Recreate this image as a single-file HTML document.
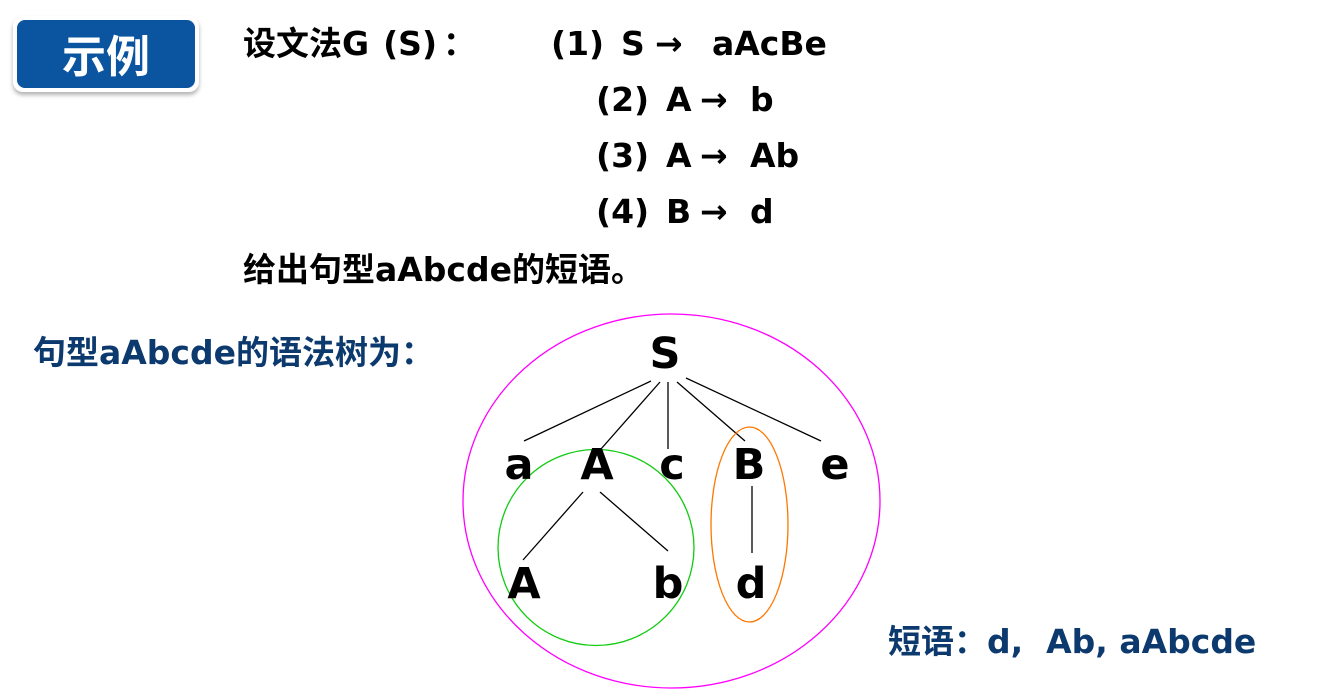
<!DOCTYPE html>
<html><head><meta charset="utf-8"><style>
body{margin:0;width:1330px;height:696px;background:#fff;overflow:hidden;position:relative;font-family:"DejaVu Sans","Noto Sans CJK SC",sans-serif;font-weight:bold}
.t{position:absolute;white-space:nowrap;color:#000;font-size:33px;line-height:1}
.badge{position:absolute;left:13px;top:16px;width:186px;height:76px;background:#fff;border-radius:10px;box-shadow:0 3px 4px rgba(0,0,0,.3)}
.badge div{position:absolute;left:4px;top:4px;right:4px;bottom:4px;background:#0b55a0;border-radius:8px;color:#fff;font-size:44px;text-align:center;line-height:66px;font-family:"Noto Sans CJK SC",sans-serif}
</style></head><body>
<div class="badge"><div>示例</div></div>
<div class="t" style="left:243px;top:27px">设文法G<span style="display:inline-block;width:14px"></span>(S)<span style="display:inline-block;width:6px"></span>：</div>
<div class="t" style="left:551px;top:27px">(1)</div><div class="t" style="left:621px;top:27px">S</div><div class="t" style="left:655px;top:27px">→</div><div class="t" style="left:712px;top:27px">aAcBe</div>
<div class="t" style="left:596px;top:83px">(2)</div><div class="t" style="left:666px;top:83px">A</div><div class="t" style="left:700px;top:83px">→</div><div class="t" style="left:750px;top:83px">b</div>
<div class="t" style="left:596px;top:139px">(3)</div><div class="t" style="left:666px;top:139px">A</div><div class="t" style="left:700px;top:139px">→</div><div class="t" style="left:750px;top:139px">Ab</div>
<div class="t" style="left:596px;top:195px">(4)</div><div class="t" style="left:666px;top:195px">B</div><div class="t" style="left:700px;top:195px">→</div><div class="t" style="left:750px;top:195px">d</div>
<div class="t" style="left:243px;top:253px">给出句型aAbcde的短语。</div>
<div class="t" style="left:33px;top:336px;font-size:33px;color:#0d3a6e">句型aAbcde的语法树为：</div>
<div class="t" style="left:888px;top:625px;font-size:33px;color:#0d3a6e">短语：d,&nbsp;&nbsp;Ab, aAbcde</div>
<svg width="1330" height="696" style="position:absolute;left:0;top:0">
<g stroke="#000" stroke-width="1.3">
<line x1="651" y1="381" x2="524" y2="441"/><line x1="660" y1="382" x2="601" y2="449"/>
<line x1="668" y1="382" x2="668" y2="449"/><line x1="677" y1="382" x2="745" y2="441"/>
<line x1="686" y1="378" x2="821" y2="441"/><line x1="583" y1="492" x2="523" y2="560"/>
<line x1="600" y1="492" x2="668" y2="551"/><line x1="752" y1="486" x2="752" y2="553"/>
</g>
<ellipse cx="671.5" cy="501" rx="208.5" ry="187" fill="none" stroke="#f0f" stroke-width="1.3"/>
<circle cx="596" cy="547.5" r="98" fill="none" stroke="#1c1" stroke-width="1.3"/>
<ellipse cx="749.5" cy="524.5" rx="38.5" ry="97.5" fill="none" stroke="#f70" stroke-width="1.3"/>
<g font-family="DejaVu Sans,sans-serif" font-weight="bold" font-size="43" text-anchor="middle" fill="#000">
<text x="665" y="368">S</text>
<text x="519" y="479">a</text><text x="597" y="479">A</text><text x="672" y="479">c</text><text x="749" y="479">B</text><text x="835" y="479">e</text>
<text x="524" y="598">A</text><text x="668" y="598">b</text><text x="751" y="598">d</text>
</g>
</svg>
</body></html>
